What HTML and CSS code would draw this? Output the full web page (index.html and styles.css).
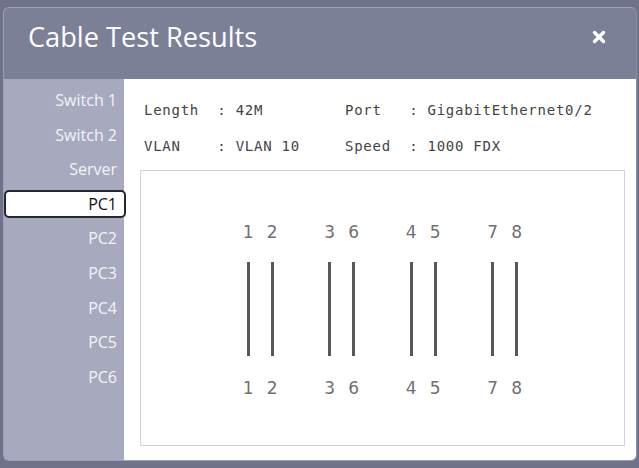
FILE: index.html
```html
<!DOCTYPE html>
<html lang="en">
<head>
  <meta charset="UTF-8" />
  <title>Cable Test Results</title>
  <link rel="stylesheet" href="styles.css">
</head>
<body>
  <div class="modal">
    <header class="modal__header">
      <h1 class="modal__title">Cable Test Results</h1>
      <button class="modal__close" type="button" aria-label="Close">
        <svg width="14" height="14" viewBox="0 0 14 14">
          <path d="M2.5 2.5 L11.5 11.5 M11.5 2.5 L2.5 11.5" stroke="#fff" stroke-width="3.4" stroke-linecap="round" />
        </svg>
      </button>
    </header>

    <div class="modal__body">
      <nav class="devices">
        <a href="#" class="devices__item">Switch 1</a>
        <a href="#" class="devices__item">Switch 2</a>
        <a href="#" class="devices__item">Server</a>
        <a href="#" class="devices__item devices__item--active">PC1</a>
        <a href="#" class="devices__item">PC2</a>
        <a href="#" class="devices__item">PC3</a>
        <a href="#" class="devices__item">PC4</a>
        <a href="#" class="devices__item">PC5</a>
        <a href="#" class="devices__item">PC6</a>
      </nav>

      <main class="result">
        <div class="result__info">
          <span>Length  : 42M</span>
          <span>Port   : GigabitEthernet0/2</span>
          <span>VLAN    : VLAN 10</span>
          <span>Speed  : 1000 FDX</span>
        </div>

        <div class="result__box">
          <div class="pins">
            <div class="pins__pair">
              <div class="pin"><span>1</span><i class="pin__wire"></i><span>1</span></div>
              <div class="pin"><span>2</span><i class="pin__wire"></i><span>2</span></div>
            </div>
            <div class="pins__pair">
              <div class="pin"><span>3</span><i class="pin__wire"></i><span>3</span></div>
              <div class="pin"><span>6</span><i class="pin__wire"></i><span>6</span></div>
            </div>
            <div class="pins__pair">
              <div class="pin"><span>4</span><i class="pin__wire"></i><span>4</span></div>
              <div class="pin"><span>5</span><i class="pin__wire"></i><span>5</span></div>
            </div>
            <div class="pins__pair">
              <div class="pin"><span>7</span><i class="pin__wire"></i><span>7</span></div>
              <div class="pin"><span>8</span><i class="pin__wire"></i><span>8</span></div>
            </div>
          </div>
        </div>
      </main>
    </div>
  </div>
</body>
</html>
```

FILE: styles.css
```css
body {
  margin: 0;
  padding: 7px 2px 7px 3px;
  background-color: #6f728a;
  font-family: 'Open Sans', sans-serif;
}

.modal {
  width: 634px;
  height: 454px;
  box-sizing: border-box;
  display: flex;
  flex-direction: column;
  border: 1px solid #9ea1b4;
  border-right-color: #8d90a3;
  border-radius: 6px;
  background-color: #7c8097;
  overflow: hidden;
}

.modal__header {
  height: 71px;
  box-sizing: border-box;
  display: flex;
  align-items: center;
  justify-content: space-between;
  padding: 0 30px 14px 24px;
}

.modal__title {
  margin: 0;
  font-size: 27.2px;
  font-weight: 400;
  color: #ffffff;
}

.modal__close {
  background: none;
  border: none;
  padding: 0;
  display: flex;
  cursor: pointer;
}

.modal__body {
  flex: 1;
  display: flex;
}

.devices {
  width: 120px;
  padding-top: 3.7px;
  background-color: #a7aabe;
  display: flex;
  flex-direction: column;
  position: relative;
  z-index: 1;
}

.devices__item {
  height: 28px;
  margin: 3.3px -2px 3.3px 0;
  box-sizing: border-box;
  border: 2px solid transparent;
  border-radius: 5px;
  padding-right: 7px;
  display: flex;
  align-items: center;
  justify-content: flex-end;
  font-size: 16px;
  color: #f3f3f7;
  text-decoration: none;
}

.devices__item--active {
  background-color: #ffffff;
  border-color: #26262b;
  color: #111;
}

.result {
  flex: 1;
  background-color: #ffffff;
  display: flex;
  flex-direction: column;
  padding: 21px 11px 14px 16px;
}

.result__info {
  display: grid;
  grid-template-columns: 201px auto;
  row-gap: 16px;
  padding-left: 4px;
  font-family: 'DejaVu Sans Mono', monospace;
  font-size: 14px;
  letter-spacing: 0.74px;
  line-height: 20px;
  color: #444;
  white-space: pre;
}

.result__box {
  flex: 1;
  margin-top: 14px;
  border: 1px solid #d2d2d2;
  display: flex;
  align-items: center;
  justify-content: center;
}

.pins {
  display: flex;
  gap: 33.5px;
  padding-top: 4px;
}

.pins__pair {
  display: flex;
}

.pin {
  width: 24px;
  display: flex;
  flex-direction: column;
  align-items: center;
  font-family: 'DejaVu Sans', sans-serif;
  font-size: 17px;
  line-height: 20px;
  color: #707070;
}

.pin__wire {
  width: 3px;
  height: 94px;
  margin: 20px 0 22px;
  background-color: #585858;
}
```
